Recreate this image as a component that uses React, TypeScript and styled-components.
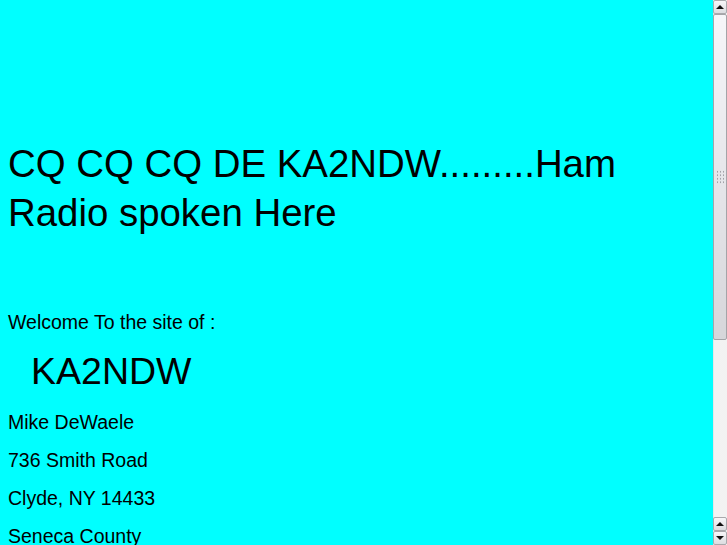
import styled, { createGlobalStyle } from 'styled-components';

const GlobalStyle = createGlobalStyle`
  html {
    scrollbar-width: none;
  }

  body {
    margin: 0;
    background: #00ffff;
    color: #000;
    font-family: "Liberation Sans", Arial, sans-serif;
  }
`;

const Page = styled.main`
  padding: 8px 22px 8px 8px;
  min-height: 824px;
`;

const Banner = styled.h1`
  margin: 131px 0 0;
  font-size: 38.4px;
  font-weight: normal;
  line-height: 49px;
`;

const Line = styled.p<{ gap?: number }>`
  margin: ${({ gap = 16 }) => `${gap}px`} 0 0;
  font-size: 19.5px;
  line-height: 22px;
`;

const Callsign = styled.p`
  margin: 13.5px 0 0;
  padding-left: 23px;
  font-size: 37.5px;
  line-height: 49px;
`;

/* browser scrollbar, drawn over the right edge */
const ScrollBar = styled.aside`
  position: fixed;
  top: 0;
  right: 0;
  width: 14px;
  height: 100vh;
  display: flex;
  flex-direction: column;
  background: #f8f8f8;
  box-shadow: inset 1px 0 0 #e2e2e2;
`;

const ArrowButton = styled.div<{ down?: boolean }>`
  flex: 0 0 14px;
  box-sizing: border-box;
  display: flex;
  align-items: center;
  justify-content: center;
  border: 1px solid #a9a9ad;
  border-radius: 2px;
  background: linear-gradient(to bottom, #f7f7f9, #dcdce0);

  &::before {
    content: '';
    width: 0;
    height: 0;
    border-left: 4px solid transparent;
    border-right: 4px solid transparent;
    ${({ down }) => (down ? 'border-top: 4px solid #111;' : 'border-bottom: 4px solid #111;')}
  }
`;

const Thumb = styled.div`
  flex: 0 0 326px;
  box-sizing: border-box;
  display: flex;
  align-items: center;
  justify-content: center;
  border: 1px solid #a4a4a8;
  border-radius: 2px;
  background: linear-gradient(to bottom, #f6f6f9, #e6e6ea 50%, #d6d6da);
`;

const Grip = styled.div`
  width: 9px;
  height: 14px;
  margin-left: 1px;
  background-image: radial-gradient(circle, #a2a2a8 0.7px, transparent 1px);
  background-size: 3px 3.5px;
`;

const Track = styled.div`
  flex: 1;
  background-image: radial-gradient(circle, #ececec 0.6px, transparent 0.8px);
  background-size: 2px 2px;
`;

const address = ['Mike DeWaele', '736 Smith Road', 'Clyde, NY 14433', 'Seneca County'];

export default function App() {
  return (
    <>
      <GlobalStyle />
      <Page>
        <Banner>CQ CQ CQ DE KA2NDW.........Ham Radio spoken Here</Banner>
        <Line gap={74}>Welcome To the site of :</Line>
        <Callsign>KA2NDW</Callsign>
        {address.map((text, i) => (
          <Line key={text} gap={i === 0 ? 15.5 : 16}>
            {text}
          </Line>
        ))}
      </Page>
      <ScrollBar>
        <ArrowButton />
        <Thumb>
          <Grip />
        </Thumb>
        <Track />
        <ArrowButton />
        <ArrowButton down />
      </ScrollBar>
    </>
  );
}
